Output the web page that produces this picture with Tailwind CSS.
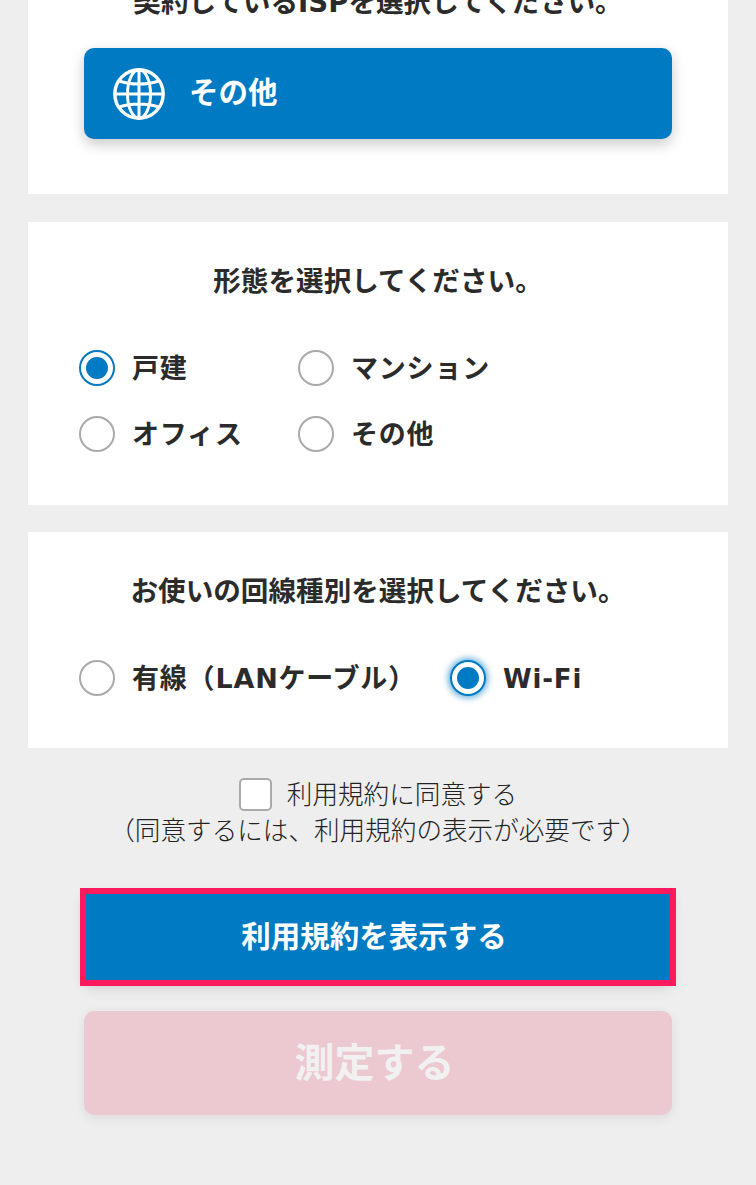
<!DOCTYPE html>
<html lang="ja">
<head>
    <meta charset="UTF-8">
    <meta name="viewport" content="width=device-width, initial-scale=1.0">
    <title>測定</title>
    <script src="https://cdn.jsdelivr.net/npm/@tailwindcss/browser@4"></script>
</head>
<body class="bg-[#eeeeee] text-[#2b2b2b] font-['DejaVu_Sans','Noto_Sans_CJK_JP',sans-serif] overflow-hidden">
<div class="h-[1185px] overflow-hidden">
    <div class="mx-[28px] -mt-[38px] flex flex-col gap-[28px]">

        <!-- ISP -->
        <section class="bg-white pt-[23px] pb-[55px] px-[56px]">
            <h2 class="text-[27.6px] leading-[36px] font-bold text-center mb-[27px] whitespace-nowrap">契約しているISPを選択してください。</h2>
            <button class="w-full h-[91px] bg-[#007ac3] rounded-[10px] shadow-[0_5px_14px_rgba(0,0,0,0.22)] flex items-center pl-[29px] gap-[24px] text-white text-[29.5px] font-bold">
                <svg class="w-[52px] h-[52px]" viewBox="0 0 52 52" fill="none" stroke="white" stroke-width="3">
                    <circle cx="26" cy="26" r="24.2" stroke-width="3.4"/>
                    <ellipse cx="26" cy="26" rx="11.5" ry="24.2"/>
                    <path d="M26 2V50M2 26H50M6 13C18 17 34 17 46 13M6 39C18 35 34 35 46 39"/>
                </svg>
                <span>その他</span>
            </button>
        </section>

        <!-- 形態 -->
        <section class="bg-white h-[283px] px-[51px] pt-[42px]">
            <h2 class="text-[27.6px] leading-[36px] font-bold text-center">形態を選択してください。</h2>
            <div class="grid grid-cols-[219px_1fr] gap-y-[30px] mt-[50px] text-[27px] leading-[36px] font-bold tracking-[0.03em]">
                <label class="flex items-center gap-[17px] h-[36px]">
                    <span class="w-[36px] h-[36px] rounded-full border-2 border-[#007ac3] bg-white flex items-center justify-center"><span class="w-[22px] h-[22px] rounded-full bg-[#007ac3]"></span></span><span class="mt-[2px]">戸建</span>
                </label>
                <label class="flex items-center gap-[17px] h-[36px]">
                    <span class="w-[36px] h-[36px] rounded-full border-2 border-[#aaaaaa] bg-white"></span><span class="mt-[2px]">マンション</span>
                </label>
                <label class="flex items-center gap-[17px] h-[36px]">
                    <span class="w-[36px] h-[36px] rounded-full border-2 border-[#aaaaaa] bg-white"></span><span class="mt-[2px]">オフィス</span>
                </label>
                <label class="flex items-center gap-[17px] h-[36px]">
                    <span class="w-[36px] h-[36px] rounded-full border-2 border-[#aaaaaa] bg-white"></span><span class="mt-[2px]">その他</span>
                </label>
            </div>
        </section>

        <!-- 回線種別 -->
        <section class="bg-white h-[216px] px-[51px] pt-[42px] -mt-[1px]">
            <h2 class="text-[27.6px] leading-[36px] font-bold text-center">お使いの回線種別を選択してください。</h2>
            <div class="flex mt-[50px] text-[27px] leading-[36px] font-bold tracking-[0.03em]">
                <label class="flex items-center gap-[17px] w-[371px] h-[36px] whitespace-nowrap">
                    <span class="w-[36px] h-[36px] rounded-full border-2 border-[#aaaaaa] bg-white shrink-0"></span><span class="mt-[2px]">有線（LANケーブル）</span>
                </label>
                <label class="flex items-center gap-[17px] h-[36px]">
                    <span class="w-[36px] h-[36px] rounded-full border-2 border-[#007ac3] bg-white flex items-center justify-center shadow-[0_0_6px_2px_rgba(0,122,195,0.6)]"><span class="w-[22px] h-[22px] rounded-full bg-[#007ac3]"></span></span><span class="text-[26px] mt-[2px]">Wi-Fi</span>
                </label>
            </div>
        </section>
    </div>

    <!-- 同意 -->
    <div class="mt-[28px] text-center text-[25.6px] leading-[36px] font-light text-[#222222] whitespace-nowrap">
        <label class="flex items-center justify-center gap-[15px] h-[36px]">
            <span class="w-[33px] h-[33px] rounded-[5px] border-2 border-[#aaaaaa] bg-white"></span><span class="mt-[2px]">利用規約に同意する</span>
        </label>
        <p class="pt-[1px]">（同意するには、利用規約の表示が必要です）</p>
    </div>

    <!-- ボタン -->
    <div class="mx-[84px] mt-[43px] flex flex-col gap-[29px]">
        <button class="h-[86px] mx-[2px] my-[2px] pr-[8px] bg-[#007ac3] text-white text-[29.5px] font-bold outline-[6.5px] outline-[#ff1a5e] shadow-[0_5px_14px_rgba(0,0,0,0.2)]">利用規約を表示する</button>
        <button class="h-[104px] pr-[7px] bg-[#ecc8d0] text-[#f1f1f1] text-[40px] font-bold rounded-[10px] shadow-[0_3px_12px_rgba(0,0,0,0.08)]">測定する</button>
    </div>
</div>
</body>
</html>
